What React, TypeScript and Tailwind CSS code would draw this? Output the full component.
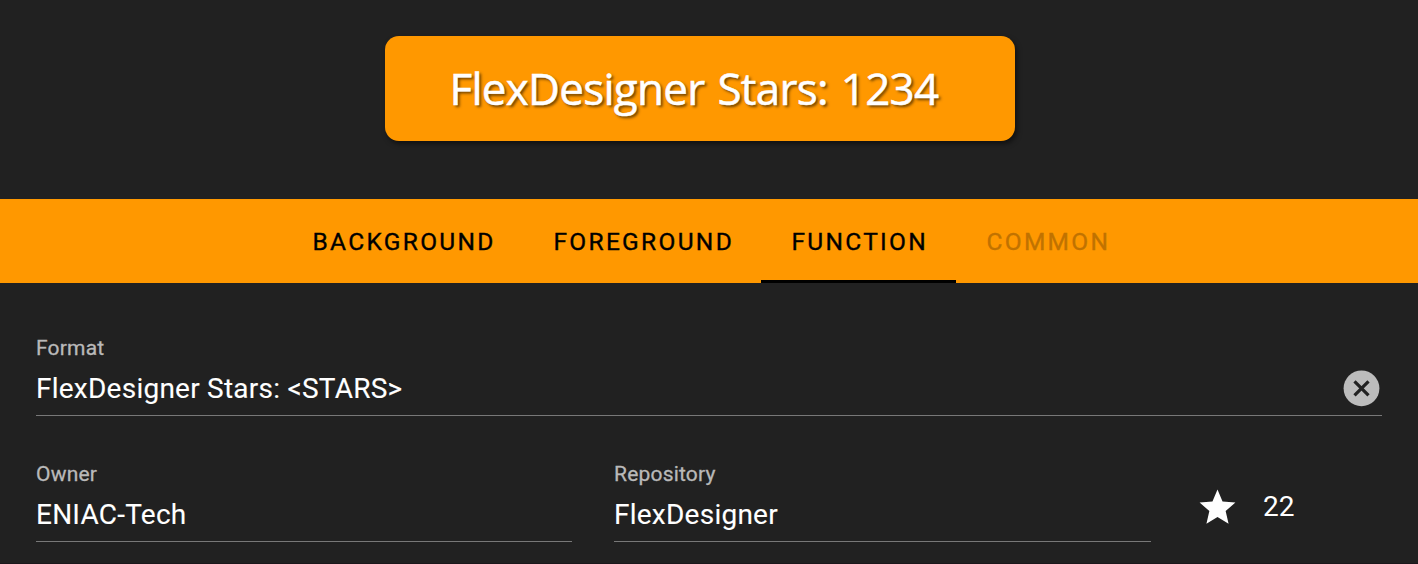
const tabs = [
  { label: 'BACKGROUND', width: 'w-[241px]' },
  { label: 'FOREGROUND', width: 'w-[238px]' },
  { label: 'FUNCTION', width: 'w-[195px]', active: true },
  { label: 'COMMON', width: 'w-[182px]', disabled: true },
];

function Field({ label, value, className, clearable }: { label: string; value: string; className: string; clearable?: boolean }) {
  return (
    <div className={`flex h-[84px] items-start justify-between border-b border-[#787878] ${className}`}>
      <div className="flex flex-col">
        <span className="mt-[2px] text-[21px] leading-[28px] tracking-[0.2px] text-[#b9b9b9] [-webkit-text-stroke:0.3px_#b9b9b9]">{label}</span>
        <span className="mt-[7px] whitespace-nowrap text-[28px] leading-[40px] tracking-[0.24px] text-white [-webkit-text-stroke:0.1px_white]">{value}</span>
      </div>
      {clearable && (
        <svg viewBox="0 0 42 42" className="mt-[35px] size-[42px]">
          <circle cx="21.5" cy="21.3" r="17.9" className="fill-[#bcbcbc]" />
          <path d="M14.5 14.3l14 14M28.5 14.3l-14 14" className="fill-none stroke-[#212121] stroke-[3.2]" />
        </svg>
      )}
    </div>
  );
}

export default function App() {
  return (
    <div className="flex h-[564px] w-[1418px] flex-col overflow-hidden bg-[#212121] font-['Roboto',sans-serif]">
      <div className="flex h-[199px] justify-center pt-9 pr-[18px]">
        <div className="flex h-[105px] w-[630px] items-center justify-center rounded-[14px] bg-[#ff9800] pr-[12px] pb-px shadow-[2px_3px_5px_rgba(0,0,0,0.5)]">
          <span className="whitespace-nowrap font-['Open_Sans',sans-serif] text-[44px] tracking-[-0.75px] text-white [word-spacing:2.4px] [-webkit-text-stroke:0.5px_white] [text-shadow:2px_2px_3px_rgba(0,0,0,0.6)]">FlexDesigner Stars: 1234</span>
        </div>
      </div>
      <div className="flex h-[84px] shrink-0 bg-[#ff9800] pl-[282px]">
        {tabs.map((t) => (
          <div
            key={t.label}
            className={`flex h-full items-center border-b-[3px] pt-[5px] pl-[30.5px] text-[24.5px] tracking-[2.3px] ${t.width} ${t.active ? 'border-black' : 'border-transparent'} ${t.disabled ? 'text-[#c07200] [-webkit-text-stroke:0.3px_#c07200]' : 'text-black [-webkit-text-stroke:0.35px_black]'}`}
          >
            {t.label}
          </div>
        ))}
      </div>
      <div className="flex flex-col px-9 pt-[49px]">
        <Field label="Format" value="FlexDesigner Stars: <STARS>" className="w-[1346px]" clearable />
        <div className="mt-[42px] flex">
          <Field label="Owner" value="ENIAC-Tech" className="w-[536px]" />
          <Field label="Repository" value="FlexDesigner" className="ml-[42px] w-[537px]" />
          <div className="ml-[45px] flex h-[84px] items-center pt-[14px]">
            <svg viewBox="0 0 24 24" className="size-[43px] fill-white">
              <path d="M12 17.27L18.18 21l-1.64-7.03L22 9.24l-7.19-.61L12 2 9.19 8.63 2 9.24l5.46 4.73L5.82 21z" />
            </svg>
            <span className="ml-[24px] text-[28px] text-white">22</span>
          </div>
        </div>
      </div>
      <div className="mt-auto h-px shrink-0 bg-[#1b171b]" />
    </div>
  );
}
